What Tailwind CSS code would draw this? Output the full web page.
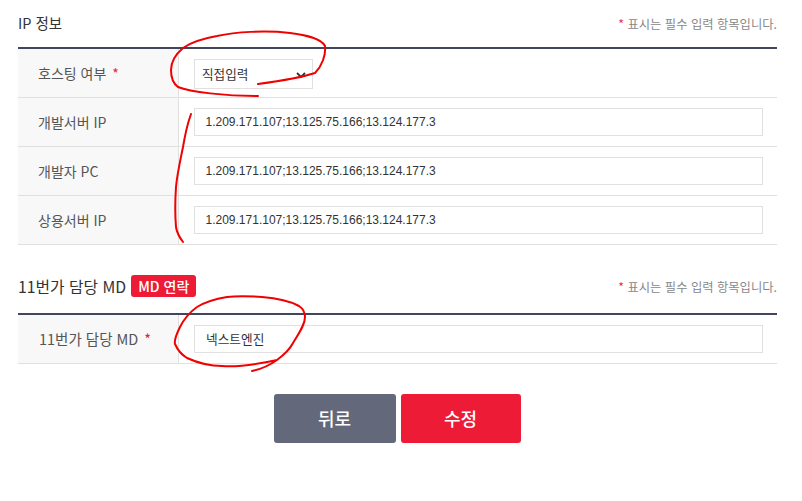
<!DOCTYPE html>
<html lang="ko">
<head>
    <meta charset="UTF-8">
    <title>IP 정보</title>
    <script src="https://cdn.jsdelivr.net/npm/@tailwindcss/browser@4"></script>
</head>
<body class="relative w-[802px] h-[501px] overflow-hidden bg-white font-['Noto_Sans_CJK_KR','Noto_Sans',sans-serif] text-[#333]">
    <div class="w-[759px] ml-[18px]">
        <!-- IP 정보 -->
        <div class="flex justify-between items-center h-[47px] pb-[1px]">
            <h2 class="text-[14.5px] text-[#333]">IP 정보</h2>
            <p class="text-[12.3px] text-[#888] mt-[2px]"><span class="text-[#ed1b35]">*</span> 표시는 필수 입력 항목입니다.</p>
        </div>
        <div class="border-t-2 border-[#41465e]">
            <div class="flex h-[49px] border-b border-[#e0e0e0]">
                <div class="w-[161px] shrink-0 bg-[#f8f8f8] border-r border-[#e0e0e0] pl-[20px] flex items-center text-[14px] text-[#555]">호스팅 여부 <span class="text-[#ed1b35] ml-[6px]">*</span></div>
                <div class="pl-[15px] pt-[10px]">
                    <div class="w-[119px] h-[30px] border border-[#e0e0e0] flex items-center justify-between pl-[7px] pr-[6px] text-[12.6px] text-[#333]">
                        직접입력
                        <svg width="10" height="7" viewBox="0 0 10 7" class="mt-[3px]" fill="none" stroke="#333" stroke-width="1.8"><path d="M1 1l4 4 4-4"/></svg>
                    </div>
                </div>
            </div>
            <div class="flex h-[49px] border-b border-[#e0e0e0]">
                <div class="w-[161px] shrink-0 bg-[#f8f8f8] border-r border-[#e0e0e0] pl-[20px] flex items-center text-[14px] text-[#555]">개발서버 IP</div>
                <div class="pl-[15px] pt-[10px]">
                    <div class="w-[569px] h-[28px] border border-[#e0e0e0] flex items-center pl-[10.5px] text-[12px] font-['Liberation_Sans','Noto_Sans_CJK_KR',sans-serif] text-[#333]">1.209.171.107;13.125.75.166;13.124.177.3</div>
                </div>
            </div>
            <div class="flex h-[49px] border-b border-[#e0e0e0]">
                <div class="w-[161px] shrink-0 bg-[#f8f8f8] border-r border-[#e0e0e0] pl-[20px] flex items-center text-[14px] text-[#555]">개발자 PC</div>
                <div class="pl-[15px] pt-[10px]">
                    <div class="w-[569px] h-[28px] border border-[#e0e0e0] flex items-center pl-[10.5px] text-[12px] font-['Liberation_Sans','Noto_Sans_CJK_KR',sans-serif] text-[#333]">1.209.171.107;13.125.75.166;13.124.177.3</div>
                </div>
            </div>
            <div class="flex h-[49px] border-b border-[#e0e0e0]">
                <div class="w-[161px] shrink-0 bg-[#f8f8f8] border-r border-[#e0e0e0] pl-[20px] flex items-center text-[14px] text-[#555]">상용서버 IP</div>
                <div class="pl-[15px] pt-[10px]">
                    <div class="w-[569px] h-[28px] border border-[#e0e0e0] flex items-center pl-[10.5px] text-[12px] font-['Liberation_Sans','Noto_Sans_CJK_KR',sans-serif] text-[#333]">1.209.171.107;13.125.75.166;13.124.177.3</div>
                </div>
            </div>
        </div>

        <!-- 11번가 담당 MD -->
        <div class="flex justify-between items-center h-[68px] pt-[18px] pb-[2px]">
            <div class="flex items-center gap-[5px]">
                <h2 class="text-[15.8px] text-[#333]">11번가 담당 MD</h2>
                <span class="w-[65px] h-[22px] -mt-[2px] rounded-[3px] bg-[#ed1b35] text-white text-[14px] font-medium flex items-center justify-center">MD 연락</span>
            </div>
            <p class="text-[12.3px] text-[#888]"><span class="text-[#ed1b35]">*</span> 표시는 필수 입력 항목입니다.</p>
        </div>
        <div class="border-t-2 border-[#41465e]">
            <div class="flex h-[49px] border-b border-[#e0e0e0]">
                <div class="w-[161px] shrink-0 bg-[#f8f8f8] border-r border-[#e0e0e0] pl-[21px] flex items-center text-[14.5px] text-[#555]">11번가 담당 MD <span class="text-[#ed1b35] ml-[6px]">*</span></div>
                <div class="pl-[15px] pt-[10px]">
                    <div class="w-[569px] h-[28px] border border-[#e0e0e0] flex items-center pl-[11px] text-[12.7px] text-[#333]">넥스트엔진</div>
                </div>
            </div>
        </div>

        <div class="flex justify-center gap-[5px] mt-[30px] pr-[1px]">
            <button class="w-[122px] h-[49px] rounded-[3px] bg-[#63687b] text-white text-[18px] font-medium">뒤로</button>
            <button class="w-[120px] h-[49px] rounded-[3px] bg-[#ed1b35] text-white text-[18px] font-medium">수정</button>
        </div>
    </div>

    <!-- 빨간 펜 표시 -->
    <svg class="absolute top-0 left-0 pointer-events-none" width="802" height="501" viewBox="0 0 802 501" fill="none" stroke="#f00000" stroke-width="2" stroke-linecap="round" stroke-linejoin="round">
        <path d="M258 84C280 81 300 78 315 73C322 66 326 55 325 46C321 38 305 35 290 33C265 30 235 32 217 36C200 39 190 43 183 48C176 54 171 62 171 70C171 78 174 84 178 87C190 92 225 96 258 96"/>
        <path d="M191 114C187 125 185 135 183 147C180 162 177 175 176 187C175 202 175 215 176 227C177 234 180 238 183 242"/>
        <path d="M252 371C262 369 270 365 277 360C285 354 290 349 293 343C299 333 305 325 305 317C305 311 302 308 299 306C288 300 275 298 262 297C248 296 235 296 227 297C215 299 205 302 197 307C190 312 184 319 180 327C176 335 174 340 175 344C178 351 182 355 187 358C198 363 210 366 222 366C235 367 250 366 277 360"/>
    </svg>
</body>
</html>
